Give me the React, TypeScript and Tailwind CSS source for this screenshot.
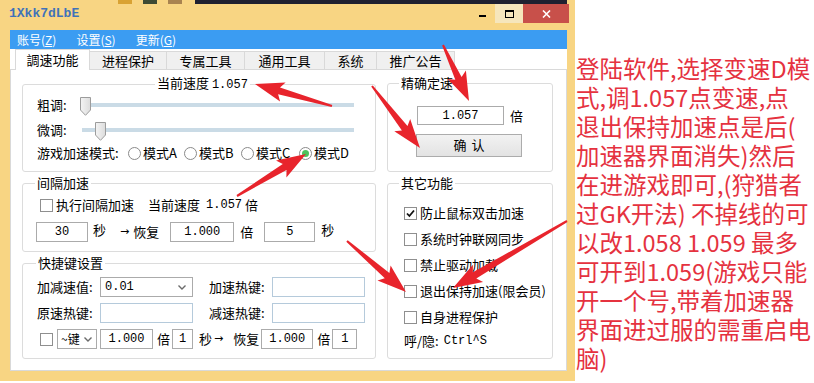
import React from "react";

type Pt = [number, number];

// red annotation arrows drawn over the window: [tail, tip]
const arrows: [Pt, Pt][] = [
  [[332, 106], [255, 84]],
  [[372, 86], [420, 148]],
  [[443, 45], [469, 101]],
  [[237, 196], [306, 154]],
  [[567, 221], [453, 288]],
  [[347, 241], [406, 292]],
];

function arrowPoints([tx, ty]: Pt, [px, py]: Pt) {
  const dx = px - tx;
  const dy = py - ty;
  const len = Math.hypot(dx, dy);
  const ux = dx / len;
  const uy = dy / len;
  const nx = -uy;
  const ny = ux;
  const hl = 25, hw = 10, nw = 3.5, tw = 1;
  const cx = px - ux * hl;
  const cy = py - uy * hl;
  const bx = px - ux * (hl + 4);
  const by = py - uy * (hl + 4);
  const pts: Pt[] = [
    [tx + nx * tw, ty + ny * tw],
    [cx + nx * nw, cy + ny * nw],
    [bx + nx * hw, by + ny * hw],
    [px, py],
    [bx - nx * hw, by - ny * hw],
    [cx - nx * nw, cy - ny * nw],
    [tx - nx * tw, ty - ny * tw],
  ];
  return pts.map((p) => p.map((v) => v.toFixed(1)).join(",")).join(" ");
}

const mono = "font-['Liberation_Mono',monospace] text-[12px]";

function Field({ className = "", blue = false, children }: { className?: string; blue?: boolean; children?: React.ReactNode }) {
  return (
    <div
      className={`h-[20px] bg-white border ${blue ? "border-[#b5cadb]" : "border-[#ababab]"} flex items-center justify-center ${mono} ${className}`}
    >
      {children}
    </div>
  );
}

function Chevron() {
  return (
    <svg width="8" height="5" viewBox="0 0 8 5" className="shrink-0">
      <path d="M0.5 0.5 L4 4 L7.5 0.5" fill="none" stroke="#6b6b6b" strokeWidth="1.4" />
    </svg>
  );
}

function Check({ on = false }: { on?: boolean }) {
  return (
    <div className="w-[13px] h-[13px] shrink-0 border border-[#8f8f8f] bg-white flex items-center justify-center">
      {on && (
        <svg width="9" height="9" viewBox="0 0 9 9">
          <path d="M1 4.5 L3.4 7 L8 1.5" fill="none" stroke="#111" strokeWidth="1.8" />
        </svg>
      )}
    </div>
  );
}

function Radio({ on = false, label, className = "" }: { on?: boolean; label: string; className?: string }) {
  return (
    <div className={`flex items-center ${className}`}>
      <div className="w-[13px] h-[13px] rounded-full border border-[#8a8a8a] bg-white flex items-center justify-center">
        {on && <div className="w-[7px] h-[7px] rounded-full bg-[#4cc25c]" />}
      </div>
      <span className="ml-[2px]">{label}</span>
    </div>
  );
}

function Slider({ thumb }: { thumb: string }) {
  return (
    <div className="relative w-[272px] h-full flex items-center">
      <div className="w-full h-[4px] bg-[#cadbe6]" />
      <svg className={`absolute ${thumb}`} width="11" height="19" viewBox="0 0 11 19">
        <defs>
          <linearGradient id="thumbFill" x1="0" y1="0" x2="1" y2="0">
            <stop offset="0" stopColor="#f4f4f4" />
            <stop offset="1" stopColor="#dcdcdc" />
          </linearGradient>
        </defs>
        <path d="M0.5 0.5 H10.5 V13 L5.5 18.3 L0.5 13 Z" fill="url(#thumbFill)" stroke="#9c9c9c" />
      </svg>
    </div>
  );
}

const tabs: [string, string][] = [
  ["調速功能", "w-[75px]"],
  ["进程保护", "w-[77px]"],
  ["专属工具", "w-[78px]"],
  ["通用工具", "w-[80px]"],
  ["系统", "w-[52px]"],
  ["推广公告", "w-[78px]"],
];

const others = ["防止鼠标双击加速", "系统时钟联网同步", "禁止驱动加载", "退出保持加速(限会员)", "自身进程保护"];

const notes = [
  "登陆软件,选择变速D模",
  "式,调1.057点变速,点",
  "退出保持加速点是后(",
  "加速器界面消失)然后",
  "在进游戏即可,(狩猎者",
  "过GK开法) 不掉线的可",
  "以改1.058 1.059 最多",
  "可开到1.059(游戏只能",
  "开一个号,带着加速器",
  "界面进过服的需重启电",
  "脑)",
];

const group = "border border-[#dcdcdc] rounded-[3px]";
const legend = "px-[2px] leading-[16px]";
const arrowGlyph = "font-['DejaVu_Sans',sans-serif] text-[11px]";

export default function App() {
  return (
    <div className="relative w-[814px] h-[383px] overflow-hidden bg-white flex font-['Noto_Sans_CJK_SC',sans-serif] text-[13px] text-black">
      {/* ── Window ── */}
      <div className="w-[575px] h-[381px] shrink-0 bg-[#f8d583] flex flex-col">
        {/* sliver of whatever sits above */}
        <div className="h-[4px] flex">
          <div className="w-[118px]" />
          <div className="w-[14px] bg-[#d9a233]" />
          <div className="w-[11px]" />
          <div className="w-[14px] bg-[#3e4a34]" />
          <div className="w-[11px]" />
          <div className="w-[14px] bg-[#a98350]" />
          <div className="w-[13px]" />
          <div className="w-[372px] bg-[#1f2030]" />
        </div>

        {/* title bar */}
        <div className="h-[26px] flex justify-between">
          <div className="h-[20px] pl-[9px] flex items-center font-['Liberation_Mono',monospace] text-[13px] font-bold text-[#3f72b9]">
            1Xkk7dLbE
          </div>
          <div className="flex h-[19px] pr-[6px]">
            <div className="w-[26px] flex items-center justify-center">
              <div className="w-[7px] h-[2px] bg-black mt-[5px]" />
            </div>
            <div className="w-[28px] bg-[#f6e6bc] flex items-center justify-center">
              <div className="w-[9px] h-[8px] border border-black border-t-2" />
            </div>
            <div className="w-[46px] bg-[#c8504a] flex items-center justify-center">
              <svg width="9" height="8" viewBox="0 0 9 8">
                <path d="M1 0.5 L8 7.5 M8 0.5 L1 7.5" stroke="#fff" strokeWidth="1.6" />
              </svg>
            </div>
          </div>
        </div>

        {/* client */}
        <div className="pl-[10px] pr-[8px] flex flex-col">
          <div className="h-[19px] bg-[#3b9cf2] text-white text-[12px] flex items-center pl-[7px] gap-[20px]">
            <span>账号(<u>Z</u>)</span>
            <span>设置(<u>S</u>)</span>
            <span>更新(<u>G</u>)</span>
          </div>

          {/* tabs */}
          <div className="h-[20px] bg-white flex items-end pl-[5px]">
            {tabs.map(([t, w], i) =>
              i === 0 ? (
                <div key={t} className={`${w} h-[21px] -mb-px relative z-10 bg-white border border-b-0 border-[#d9d9d9] flex items-center justify-center`}>
                  {t}
                </div>
              ) : (
                <div key={t} className={`${w} h-[18px] bg-[#f0f0f0] border border-l-0 border-b-0 border-[#d9d9d9] flex items-center justify-center`}>
                  {t}
                </div>
              )
            )}
          </div>

          {/* tab panel */}
          <div className="h-[302px] bg-white border border-[#d9d9d9] flex gap-[11px] pl-[11px] pt-[5px]">
            {/* left column */}
            <div className="w-[354px] flex flex-col">
              <fieldset className={`${group} h-[97px]`}>
                <legend className={`ml-[132px] ${legend}`}>
                  当前速度 <span className={mono}>1.057</span>
                </legend>
                <div className="pl-[14px]">
                  <div className="h-[24px] flex items-center">
                    <span className="w-[45px]">粗调:</span>
                    <Slider thumb="left-[-2px] top-[4px]" />
                  </div>
                  <div className="h-[26px] flex items-center">
                    <span className="w-[45px]">微调:</span>
                    <Slider thumb="left-[13px] top-[5px]" />
                  </div>
                  <div className="h-[20px] flex items-center">
                    <span className="w-[91px]">游戏加速模式:</span>
                    <Radio label="模式A" className="w-[56px]" />
                    <Radio label="模式B" className="w-[57px]" />
                    <Radio label="模式C" className="w-[58px]" />
                    <Radio label="模式D" on />
                  </div>
                </div>
              </fieldset>

              <fieldset className={`${group} mt-[3px] h-[77px]`}>
                <legend className={`ml-[12px] ${legend}`}>间隔加速</legend>
                <div className="pl-[13px]">
                  <div className="h-[20px] mt-[4px] pl-[4px] flex items-center">
                    <Check />
                    <span className="ml-[3px]">执行间隔加速</span>
                    <span className="ml-[14px]">当前速度</span>
                    <span className={`ml-[6px] ${mono}`}>1.057</span>
                    <span className="ml-[3px]">倍</span>
                  </div>
                  <div className="h-[20px] mt-[7px] flex items-center">
                    <Field className="w-[52px]">30</Field>
                    <span className="ml-[5px] -mt-[4px]">秒</span>
                    <span className={`ml-[14px] ${arrowGlyph}`}>→</span>
                    <span className="ml-[4px]">恢复</span>
                    <Field className="ml-[11px] w-[64px]">1.000</Field>
                    <span className="ml-[6px]">倍</span>
                    <Field className="ml-[11px] w-[51px]">5</Field>
                    <span className="ml-[6px] -mt-[4px]">秒</span>
                  </div>
                </div>
              </fieldset>

              <fieldset className={`${group} mt-[3px] h-[104px]`}>
                <legend className={`ml-[13px] ${legend}`}>快捷键设置</legend>
                <div className="pl-[14px]">
                  <div className="h-[20px] mt-[6px] flex items-center">
                    <span className="w-[63px]">加减速值:</span>
                    <div className="w-[93px] h-[20px] border border-[#ababab] bg-white flex items-center justify-between pl-[4px] pr-[6px]">
                      <span className={mono}>0.01</span>
                      <Chevron />
                    </div>
                    <span className="ml-[16px] w-[63px]">加速热键:</span>
                    <Field blue className="w-[93px]" />
                  </div>
                  <div className="h-[20px] mt-[6px] flex items-center">
                    <span className="w-[63px]">原速热键:</span>
                    <Field blue className="w-[93px]" />
                    <span className="ml-[16px] w-[63px]">减速热键:</span>
                    <Field blue className="w-[93px]" />
                  </div>
                  <div className="h-[20px] mt-[6px] pl-[3px] flex items-center">
                    <Check />
                    <div className="ml-[4px] w-[40px] h-[20px] border border-[#ababab] bg-white flex items-center justify-between pl-[3px] pr-[4px]">
                      <span className="text-[12px]">~键</span>
                      <Chevron />
                    </div>
                    <Field className="ml-[3px] w-[53px]">1.000</Field>
                    <span className="ml-[4px]">倍</span>
                    <Field className="ml-[2px] w-[21px]">1</Field>
                    <span className="ml-[6px]">秒</span>
                    <span className={`ml-[2px] ${arrowGlyph}`}>→</span>
                    <span className="ml-[10px]">恢复</span>
                    <Field className="ml-[2px] w-[52px]">1.000</Field>
                    <span className="ml-[4px]">倍</span>
                    <Field className="ml-[2px] w-[25px]">1</Field>
                  </div>
                </div>
              </fieldset>
            </div>

            {/* right column */}
            <div className="w-[166px] flex flex-col">
              <fieldset className={`${group} h-[97px]`}>
                <legend className={`ml-[11px] ${legend}`}>精确定速</legend>
                <div className="pl-[29px]">
                  <div className="mt-[15px] flex items-center">
                    <Field className="w-[87px] !h-[19px]">1.057</Field>
                    <span className="ml-[6px]">倍</span>
                  </div>
                  <button className="mt-[8px] -ml-[1px] w-[106px] h-[23px] border border-[#acacac] bg-gradient-to-b from-[#f2f2f2] to-[#e3e3e3] flex items-center justify-center gap-[5px]">
                    <span>确</span>
                    <span>认</span>
                  </button>
                </div>
              </fieldset>

              <fieldset className={`${group} mt-[3px] h-[184px]`}>
                <legend className={`ml-[11px] ${legend}`}>其它功能</legend>
                <div className="pl-[16px] pt-[9px] flex flex-col">
                  {others.map((t, i) => (
                    <div key={t} className="h-[26px] flex items-center">
                      <Check on={i === 0} />
                      <span className="ml-[3px]">{t}</span>
                    </div>
                  ))}
                  <div className="h-[22px] flex items-center">
                    <span>呼/隐:</span>
                    <span className={`ml-[5px] ${mono}`}>Ctrl^S</span>
                  </div>
                </div>
              </fieldset>
            </div>
          </div>
        </div>
      </div>

      {/* ── Notes ── */}
      <div className="pl-[1px] pt-[54px] text-[23.5px] leading-[29px] text-[#e5323f] whitespace-nowrap">
        {notes.map((l) => (
          <div key={l}>{l}</div>
        ))}
      </div>

      {/* annotation arrows */}
      <svg className="absolute left-0 top-0 pointer-events-none" width="814" height="383">
        {arrows.map(([t, p], i) => (
          <polygon key={i} points={arrowPoints(t, p)} fill="#e8242c" />
        ))}
      </svg>
    </div>
  );
}
